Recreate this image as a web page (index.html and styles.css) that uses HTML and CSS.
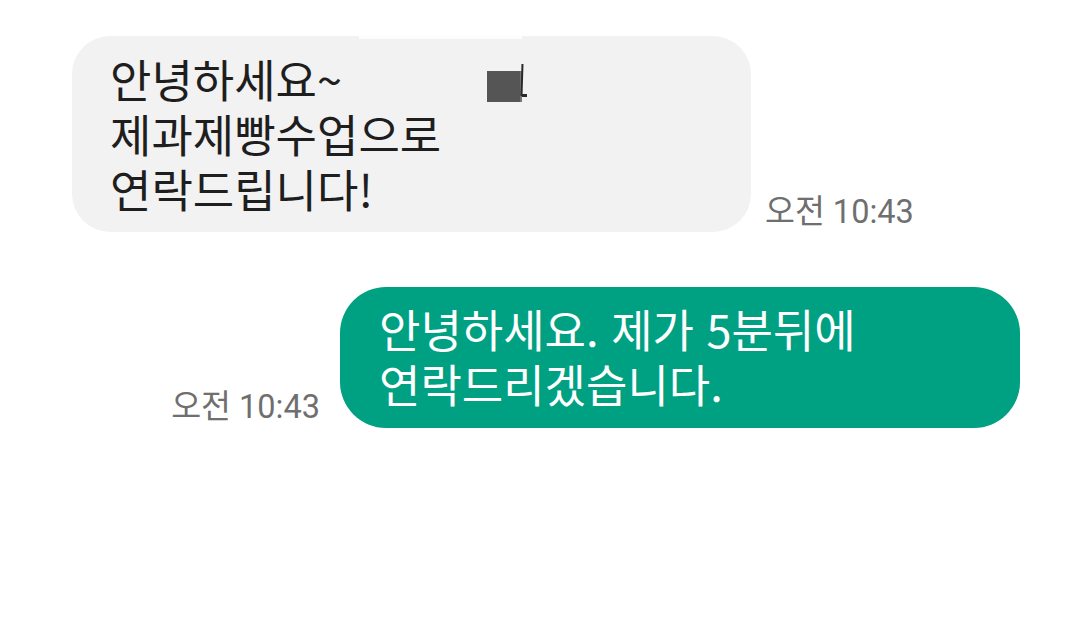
FILE: index.html
```html
<!DOCTYPE html>
<html lang="ko">
<head>
<meta charset="utf-8">
<link rel="stylesheet" href="styles.css">
</head>
<body>
<div class="chat">
  <div class="row row-in">
    <div class="bubble bubble-in">
      <span class="mask-strip"></span>
      <svg class="redact" width="44" height="40" viewBox="0 0 44 40">
        <rect x="0" y="7" width="33" height="31" fill="#555555"/>
        <rect x="33" y="7" width="2" height="31" fill="#777777"/>
        <path d="M35.5 0 L34.5 32" stroke="#2a2a2a" stroke-width="2" fill="none"/>
        <path d="M35 31.5 H40" stroke="#2a2a2a" stroke-width="3" fill="none"/>
      </svg>
      <p class="msg"><span class="line">안녕하세요~</span><span class="line">제과제빵수업으로</span><span class="line">연락드립니다!</span></p>
    </div>
    <span class="time time-in">오전 10:43</span>
  </div>
  <div class="row row-out">
    <span class="time time-out">오전 10:43</span>
    <div class="bubble bubble-out">
      <p class="msg"><span class="line">안녕하세요. 제가 5분뒤에</span><span class="line">연락드리겠습니다.</span></p>
    </div>
  </div>
</div>
</body>
</html>
```

FILE: styles.css
```css
html, body {
  margin: 0;
  padding: 0;
  background: #ffffff;
}
.chat {
  width: 1080px;
  height: 624px;
  display: flex;
  flex-direction: column;
  padding-top: 36px;
  box-sizing: border-box;
  font-family: "Noto Sans CJK KR", "Noto Sans", sans-serif;
}
.row {
  display: flex;
  align-items: flex-end;
}
.row-in {
  padding-left: 72px;
}
.row-out {
  justify-content: flex-end;
  padding-right: 60px;
  margin-top: 55px;
}
.bubble {
  position: relative;
  box-sizing: border-box;
}
.bubble-in {
  width: 679px;
  background: #f2f2f2;
  border-radius: 38px;
  padding: 15px 38px 16px;
  color: #1e1e1e;
}
.bubble-out {
  width: 680px;
  background: #00a183;
  border-radius: 46px;
  padding: 14px 39px 17px;
  color: #ffffff;
}
.msg {
  margin: 0;
  font-size: 45px;
  line-height: 55px;
  letter-spacing: 0;
}
.line {
  display: block;
  height: 55px;
}
.time {
  font-family: "Roboto", "Noto Sans CJK KR", sans-serif;
  font-size: 32.5px;
  color: #6f6f6f;
  line-height: 38px;
  white-space: nowrap;
}
.time-in {
  margin-left: 14px;
  margin-bottom: 1px;
}
.time-out {
  margin-right: 20px;
  margin-bottom: 2px;
}
.mask-strip {
  position: absolute;
  left: 287px;
  top: 0;
  width: 163px;
  height: 3px;
  background: #fdfdfd;
}
.redact {
  position: absolute;
  left: 415px;
  top: 28px;
}
```
